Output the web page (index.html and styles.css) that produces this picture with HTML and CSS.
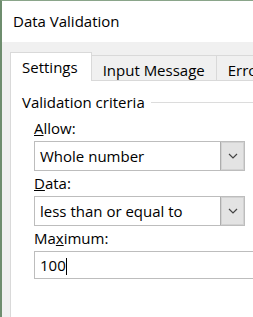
FILE: index.html
```html
<!DOCTYPE html>
<html lang="en">
<head>
    <meta charset="UTF-8">
    <title>Data Validation</title>
    <link rel="stylesheet" href="styles.css">
</head>
<body>
    <div class="window">
        <div class="titlebar">Data Validation</div>

        <div class="dialog">
            <div class="tabs">
                <div class="tab active">Settings</div>
                <div class="tab">Input Message</div>
                <div class="tab">Error Alert</div>
            </div>

            <div class="panel">
                <div class="group-title">
                    <span>Validation criteria</span>
                    <div class="rule"></div>
                </div>

                <div class="field first">
                    <label><u>A</u>llow:</label>
                    <div class="select">
                        <span class="value">Whole number</span>
                        <span class="arrow">
                            <svg width="10" height="6" viewBox="0 0 10 6"><path d="M1 1 L5 5 L9 1" fill="none" stroke="#444" stroke-width="1.2"/></svg>
                        </span>
                    </div>
                </div>

                <div class="field">
                    <label><u>D</u>ata:</label>
                    <div class="select">
                        <span class="value">less than or equal to</span>
                        <span class="arrow">
                            <svg width="10" height="6" viewBox="0 0 10 6"><path d="M1 1 L5 5 L9 1" fill="none" stroke="#444" stroke-width="1.2"/></svg>
                        </span>
                    </div>
                </div>

                <div class="field">
                    <label>Ma<u>x</u>imum:</label>
                    <div class="textbox">100<span class="caret"></span></div>
                </div>
            </div>
        </div>
    </div>
</body>
</html>
```

FILE: styles.css
```css
body {
    margin: 0;
    background-color: #ffffff;
    font-family: "Open Sans", "Noto Sans", sans-serif;
    font-size: 15px;
    color: #000000;
    overflow: hidden;
}

.window {
    height: 316px;
    border-top: 1px solid #8aa58a;
    border-left: 2px solid #6e8d6e;
    overflow: hidden;
}

.titlebar {
    height: 41px;
    padding-left: 11px;
    line-height: 40px;
    background-color: #ffffff;
}

.dialog {
    background-color: #f0f0f0;
    padding: 10px 0 0 8px;
    height: 300px;
}

.tabs {
    display: flex;
    align-items: flex-end;
    white-space: nowrap;
    position: relative;
    z-index: 1;
}

.tab {
    height: 20px;
    line-height: 20px;
    padding: 4px 11px 0 11px;
    background-color: #f0f0f0;
    border-top: 1px solid #d9d9d9;
    border-right: 1px solid #d9d9d9;
}

.tab.active {
    padding: 4px 13px 4px 11px;
    background-color: #ffffff;
    border-left: 1px solid #d9d9d9;
    margin-bottom: -1px;
}

.panel {
    background-color: #ffffff;
    border-top: 1px solid #d9d9d9;
    border-left: 1px solid #d9d9d9;
    padding: 11px 0 0 11px;
    height: 260px;
}

.group-title {
    display: flex;
    align-items: center;
    line-height: 20px;
    gap: 6px;
}

.rule {
    flex: 1;
    border-top: 1px solid #dcdcdc;
    margin-top: 1px;
}

.field {
    padding-left: 12px;
    margin-top: 2px;
}

.field.first {
    margin-top: 6px;
}

.field label {
    display: block;
    line-height: 20px;
    margin-bottom: 3px;
}

.select {
    display: flex;
    width: 211px;
    height: 30px;
    border: 1px solid #bdbdbd;
    box-sizing: border-box;
    background-color: #ffffff;
}

.select .value {
    flex: 1;
    line-height: 28px;
    padding-left: 5px;
}

.select .arrow {
    width: 23px;
    display: flex;
    align-items: center;
    justify-content: center;
    background-color: #e3e3e3;
    border-left: 1px solid #adadad;
    box-shadow: inset 0 0 0 1px #d2d2d2;
}

.textbox {
    width: 240px;
    height: 28px;
    border: 1px solid #bdbdbd;
    box-sizing: border-box;
    line-height: 27px;
    padding-left: 5px;
}

.caret {
    display: inline-block;
    width: 1px;
    height: 17px;
    background-color: #000000;
    vertical-align: -4px;
}
```
